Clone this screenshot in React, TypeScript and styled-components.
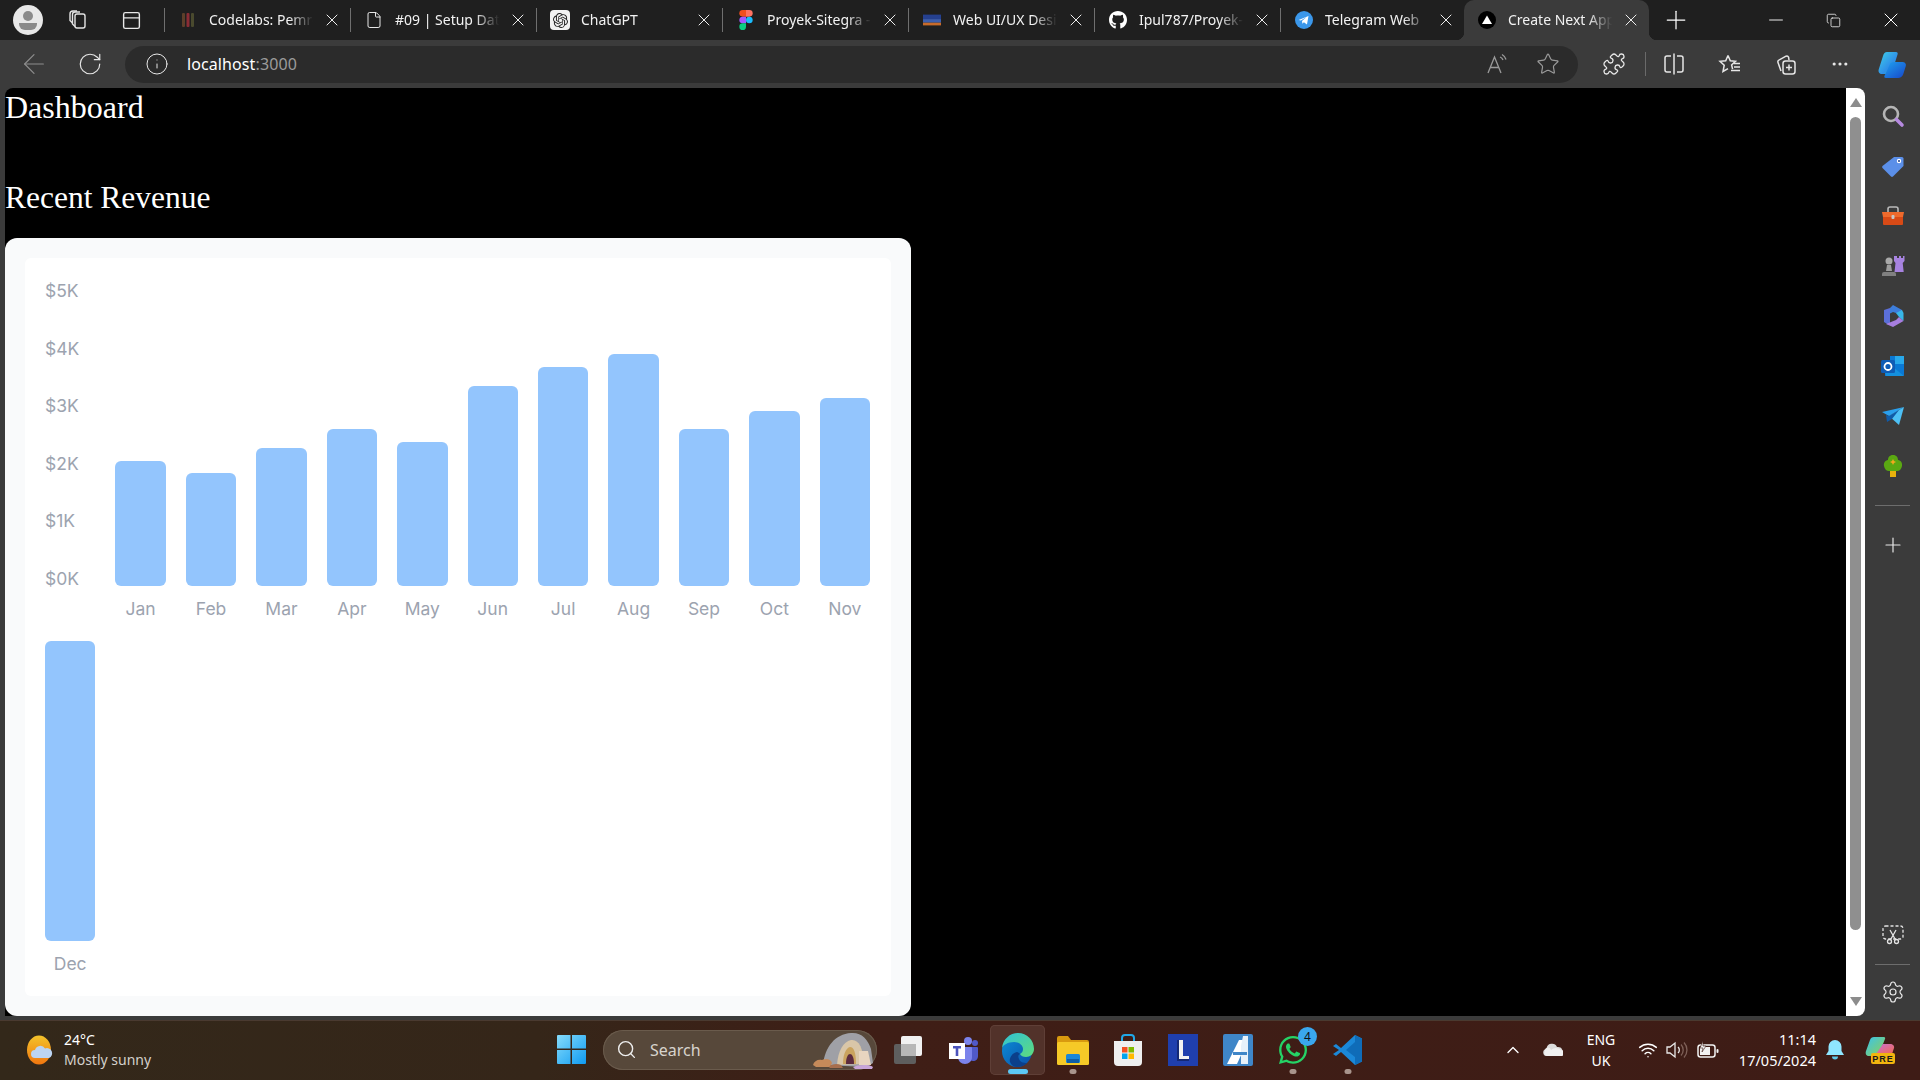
import { Fragment } from "react";
import styled, { createGlobalStyle } from "styled-components";
import {
  ArrowLeft, RotateCw, Info, Star, Plus, X, Minus, Copy, MoreHorizontal, Search,
  Settings, ChevronUp, Wifi, File, PanelTop, Puzzle,
} from "lucide-react";
import { FaGithub, FaWhatsapp } from "react-icons/fa";
import { SiOpenai } from "react-icons/si";

const GlobalStyle = createGlobalStyle`
  html, body { margin: 0; padding: 0; background: #3b3b3b; overflow: hidden; }
  * { box-sizing: border-box; }
`;

const uiFont = `"Noto Sans", "Open Sans", sans-serif`;

const Frame = styled.div`
  width: 1920px;
  height: 1080px;
  display: flex;
  flex-direction: column;
  background: #3b3b3b;
  overflow: hidden;
  font-family: ${uiFont};
`;

/* title bar + tabs */
const TabStrip = styled.div`
  height: 40px;
  flex: none;
  display: flex;
  align-items: center;
  background: #1f1f1f;
  color: #fff;
`;
const StripSlot = styled.div<{ $w: number }>`
  width: ${({ $w }) => $w}px;
  height: 100%;
  flex: none;
  display: flex;
  align-items: center;
  justify-content: center;
`;
const Avatar = styled.div`
  width: 30px;
  height: 30px;
  border-radius: 50%;
  background: #e8e8e8;
  display: flex;
  align-items: center;
  justify-content: center;
`;
const TabDivider = styled.div`
  width: 1px;
  height: 24px;
  flex: none;
  background: #6f6f6f;
`;
const Tab = styled.div<{ $active?: boolean; $w?: number }>`
  position: relative;
  width: ${({ $w }) => $w ?? 185}px;
  height: 40px;
  flex: none;
  display: flex;
  align-items: center;
  padding: 0 6px 0 14px;
  background: ${({ $active }) => ($active ? "#3b3b3b" : "transparent")};
  border-radius: ${({ $active }) => ($active ? "10px 10px 0 0" : "0")};
  ${({ $active }) =>
    $active &&
    `
    &::before, &::after {
      content: "";
      position: absolute;
      bottom: 0;
      width: 8px;
      height: 8px;
    }
    &::before { left: -8px; background: radial-gradient(circle at 0 0, transparent 8px, #3b3b3b 8.5px); }
    &::after { right: -8px; background: radial-gradient(circle at 100% 0, transparent 8px, #3b3b3b 8.5px); }
  `}
`;
const Favicon = styled.div`
  width: 18px;
  height: 18px;
  flex: none;
  display: flex;
  align-items: center;
  justify-content: center;
`;
const ChatBadge = styled.div`
  width: 20px;
  height: 20px;
  flex: none;
  display: flex;
  align-items: center;
  justify-content: center;
  border-radius: 4px;
  background: #f2f2f2;
`;
const TabTitle = styled.div`
  flex: 1;
  min-width: 0;
  margin-left: 12px;
  padding-bottom: 2px;
  font-size: 14px;
  white-space: nowrap;
  overflow: hidden;
  color: #f2f2f2;
  mask-image: linear-gradient(to right, #000 72%, transparent 94%);
`;
const TabClose = styled.div`
  width: 24px;
  flex: none;
  display: flex;
  justify-content: center;
  color: #eee;
`;
const WindowControls = styled.div`
  margin-left: auto;
  height: 100%;
  display: flex;
`;

/* address bar row */
const Toolbar = styled.div`
  height: 48px;
  flex: none;
  display: flex;
  align-items: center;
  padding-left: 6px;
  background: #3b3b3b;
  color: #e6e6e6;
`;
const ToolSlot = styled.div<{ $w?: number; $dim?: boolean }>`
  width: ${({ $w }) => $w ?? 56}px;
  flex: none;
  display: flex;
  align-items: center;
  justify-content: center;
  color: ${({ $dim }) => ($dim ? "#8d8d8d" : "inherit")};
`;
const AddressBar = styled.div`
  width: 1453px;
  height: 37px;
  flex: none;
  margin-left: 7px;
  margin-right: 8px;
  display: flex;
  align-items: center;
  padding: 0 5px 0 20px;
  border-radius: 19px;
  background: #2b2b2b;
`;
const Url = styled.div`
  margin-left: 18px;
  font-size: 16px;
  letter-spacing: 0.1px;
  color: #fff;
  span { color: #9b9b9b; }
`;
const AddressEnd = styled.div`
  margin-left: auto;
  display: flex;
  align-items: center;
  color: #9a9a9a;
`;
const ToolDivider = styled.div`
  width: 1px;
  height: 24px;
  flex: none;
  margin: 0 0 0 3px;
  background: #6a6a6a;
`;

/* browser body */
const BrowserBody = styled.div`
  height: 932px;
  flex: none;
  display: flex;
  padding: 0 0 4px 5px;
`;
const Page = styled.main`
  width: 1841px;
  height: 928px;
  flex: none;
  padding-top: 1px;
  background: #000;
  border-radius: 8px 0 0 0;
  overflow: hidden;
  font-family: "Liberation Serif", serif;
  color: #fff;
`;
const Title = styled.h1`
  margin: 0;
  font-size: 32px;
  font-weight: 400;
`;
const Subtitle = styled.h2`
  margin: 54px 0 22px;
  font-size: 31.5px;
  font-weight: 400;
`;
const Card = styled.section`
  width: 906px;
  padding: 20px;
  border-radius: 12px;
  background: #f9fafb;
`;
const ChartGrid = styled.div`
  display: grid;
  grid-template-columns: repeat(12, minmax(0, 1fr));
  align-items: end;
  gap: 20px;
  padding: 20px 21px 20px 20px;
  border-radius: 6px;
  background: #fff;
  font-family: Inter, sans-serif;
  font-size: 17.5px;
  line-height: 25px;
  color: #9ca3af;
`;
const YAxis = styled.div`
  height: 312.5px;
  margin-bottom: 30px;
  display: flex;
  flex-direction: column;
  justify-content: space-between;
`;
const MonthColumn = styled.div`
  display: flex;
  flex-direction: column;
  align-items: center;
`;
const Bar = styled.div`
  width: 100%;
  border-radius: 6px;
  background: #93c5fd;
`;
const MonthLabel = styled.p`
  margin: 10px 0 0;
`;

const Scrollbar = styled.div`
  width: 19px;
  height: 928px;
  flex: none;
  display: flex;
  flex-direction: column;
  align-items: center;
  background: #fff;
  border-radius: 0 8px 8px 0;
`;
const ScrollArrow = styled.div<{ $down?: boolean }>`
  width: 0;
  height: 0;
  flex: none;
  margin: ${({ $down }) => ($down ? "auto 0 10px" : "10px 0 0")};
  border-left: 6px solid transparent;
  border-right: 6px solid transparent;
  ${({ $down }) => ($down ? "border-top" : "border-bottom")}: 9px solid #8c8c8c;
`;
const ScrollThumb = styled.div`
  width: 11px;
  height: 813px;
  flex: none;
  margin-top: 10px;
  border-radius: 6px;
  background: #8f8f8f;
`;

const Sidebar = styled.aside`
  width: 55px;
  height: 928px;
  flex: none;
  display: flex;
  flex-direction: column;
  align-items: center;
  padding: 3px 0 6px;
  color: #e8e8e8;
`;
const SideSlot = styled.div`
  width: 100%;
  height: 50px;
  flex: none;
  display: flex;
  align-items: center;
  justify-content: center;
`;
const SideRule = styled.div<{ $tight?: boolean }>`
  width: 35px;
  height: 1px;
  flex: none;
  margin: ${({ $tight }) => ($tight ? "11px 0 9px" : "14px 0")};
  background: #6d6d6d;
`;
const SideBottom = styled.div`
  margin-top: auto;
  display: flex;
  flex-direction: column;
  align-items: center;
  width: 100%;
`;
const SideSmall = styled(SideSlot)`
  height: 36px;
`;

/* windows taskbar */
const Taskbar = styled.footer`
  height: 60px;
  flex: none;
  display: flex;
  align-items: center;
  padding-bottom: 2px;
  background: linear-gradient(90deg, #33281a 0%, #352619 28%, #3f1e16 45%, #3e1c16 100%);
  border-top: 1px solid #4a3a30;
  color: #fff;
`;
const Weather = styled.div`
  width: 544px;
  flex: none;
  display: flex;
  align-items: center;
  padding-left: 26px;
  gap: 10px;
`;
const WeatherText = styled.div`
  font-size: 14px;
  line-height: 20px;
  small { display: block; font-size: 14px; color: #d3d0cb; }
`;
const TaskSlot = styled.div<{ $active?: boolean; $running?: boolean }>`
  position: relative;
  width: 55px;
  height: 50px;
  flex: none;
  display: flex;
  align-items: center;
  justify-content: center;
  border-radius: 5px;
  ${({ $active }) => $active && "background: #52322a; box-shadow: inset 0 0 0 1px #5f3f37;"}
  ${({ $running, $active }) =>
    $running &&
    `
    &::after {
      content: "";
      position: absolute;
      bottom: 1px;
      left: 50%;
      transform: translateX(-50%);
      width: ${$active ? 20 : 7}px;
      height: 5px;
      border-radius: 3px;
      background: ${$active ? "#5cc8f5" : "#a8948c"};
    }
  `}
`;
const SearchPill = styled.div`
  position: relative;
  width: 274px;
  height: 40px;
  flex: none;
  margin: 0 3px 0 4px;
  display: flex;
  align-items: center;
  padding-left: 13px;
  gap: 13px;
  border-radius: 20px;
  background: #57483a;
  box-shadow: inset 0 0 0 1px #6a5b4c;
  font-size: 16px;
  color: #d8d4cd;
`;
const SearchArt = styled.div`
  margin-left: auto;
  margin-right: 2px;
  display: flex;
`;
const Badge = styled.span`
  position: absolute;
  top: 2px;
  right: 3px;
  width: 19px;
  height: 19px;
  border-radius: 50%;
  background: #3aa7ee;
  color: #111;
  font-size: 12px;
  line-height: 19px;
  text-align: center;
`;
const Tray = styled.div`
  margin-left: auto;
  padding-right: 18px;
  display: flex;
  align-items: center;
`;
const TraySlot = styled.div<{ $w: number }>`
  width: ${({ $w }) => $w}px;
  flex: none;
  display: flex;
  align-items: center;
  justify-content: center;
`;
const Lang = styled.div`
  font-size: 14px;
  line-height: 21px;
  text-align: center;
`;
const Clock = styled.div`
  width: 91px;
  flex: none;
  font-size: 14.5px;
  line-height: 21px;
  text-align: right;
  white-space: nowrap;
`;

const months = [
  { month: "Jan", revenue: 2000 },
  { month: "Feb", revenue: 1800 },
  { month: "Mar", revenue: 2200 },
  { month: "Apr", revenue: 2500 },
  { month: "May", revenue: 2300 },
  { month: "Jun", revenue: 3200 },
  { month: "Jul", revenue: 3500 },
  { month: "Aug", revenue: 3700 },
  { month: "Sep", revenue: 2500 },
  { month: "Oct", revenue: 2800 },
  { month: "Nov", revenue: 3000 },
  { month: "Dec", revenue: 4800 },
];
const yLabels = ["$5K", "$4K", "$3K", "$2K", "$1K", "$0K"];

const WorkspacesIcon = () => (
  <svg width="22" height="22" viewBox="0 0 22 22" fill="none" stroke="#e4e4e4" strokeWidth="1.4">
    <rect x="9" y="5" width="10" height="14" rx="2" />
    <path d="M9 17.5 6.5 15V5.5A2.5 2.5 0 0 1 9 3h5" />
    <path d="M6.5 14 4 11.5V5a3 3 0 0 1 3-3h4" />
  </svg>
);
const FigmaIcon = () => (
  <svg width="14" height="20" viewBox="0 0 14 21">
    <path d="M3.5 0H7v7H3.5a3.5 3.5 0 0 1 0-7z" fill="#f24e1e" />
    <path d="M7 0h3.5a3.5 3.5 0 0 1 0 7H7z" fill="#ff7262" />
    <path d="M3.5 7H7v7H3.5a3.5 3.5 0 0 1 0-7z" fill="#a259ff" />
    <circle cx="10.5" cy="10.5" r="3.5" fill="#1abcfe" />
    <path d="M3.5 14H7v3.5A3.5 3.5 0 1 1 3.5 14z" fill="#0acf83" />
  </svg>
);
const CodelabsIcon = () => (
  <svg width="14" height="18" viewBox="0 0 14 18">
    <rect x="1" y="2" width="3" height="14" rx="1" fill="#5d3f2a" />
    <rect x="5.5" y="2" width="3" height="14" rx="1" fill="#8a2c35" />
    <rect x="10" y="2" width="3" height="14" rx="1" fill="#4a4a2e" />
  </svg>
);
const CourseIcon = () => (
  <svg width="20" height="14" viewBox="0 0 20 14">
    <rect y="1" width="20" height="5" fill="#25408f" />
    <rect y="6" width="20" height="4" fill="#3d5fae" />
    <rect y="10" width="20" height="3" fill="#c86b2a" />
  </svg>
);
const NextIcon = () => (
  <svg width="18" height="18" viewBox="0 0 18 18">
    <circle cx="9" cy="9" r="9" fill="#000" />
    <path d="M9 4.5 14 13H4z" fill="#fff" />
  </svg>
);
const TelegramBadge = () => (
  <svg width="20" height="20" viewBox="0 0 20 20">
    <circle cx="10" cy="10" r="10" fill="#3b97ea" />
    <path d="M4 10 15 5.5 13.3 15l-3.4-2.6-1.7 1.7-.4-3.1 5-4.4-6.3 3.9z" fill="#fff" />
  </svg>
);
const ChatGptIcon = () => (
  <ChatBadge>
    <SiOpenai size={15} color="#222" />
  </ChatBadge>
);
const ReadAloudIcon = () => (
  <svg width="24" height="22" viewBox="0 0 24 22" fill="none" stroke="currentColor" strokeWidth="1.3">
    <path d="M2 20 8.5 4 15 20M4.5 14.5h8" />
    <path d="M14 4a5 5 0 0 1 3 3M16 1.5a8 8 0 0 1 4 5" />
  </svg>
);
const SplitIcon = () => (
  <svg width="24" height="24" viewBox="0 0 24 24" fill="none" stroke="currentColor" strokeWidth="1.5">
    <path d="M9 4H5a2 2 0 0 0-2 2v12a2 2 0 0 0 2 2h4" />
    <path d="M15 4h4a2 2 0 0 1 2 2v12a2 2 0 0 1-2 2h-4" />
    <path d="M12 1.500v21" />
  </svg>
);
const FavoritesIcon = () => (
  <svg width="24" height="24" viewBox="0 0 24 24" fill="none" stroke="currentColor" strokeWidth="1.5">
    <path d="M10 3.5 12.3 8.8l5.2.5-3.9 3.6 1 4.3M10 3.5 7.7 8.8l-5.7.5 4.2 3.9L5 19.5l5-2.9" />
    <path d="M16 11.5h6M16 15h6M13 18.5h9" />
  </svg>
);
const CollectionsIcon = () => (
  <svg width="24" height="24" viewBox="0 0 24 24" fill="none" stroke="currentColor" strokeWidth="1.5">
    <path d="M8 19 5 10.5a2 2 0 0 1 1.3-2.6L13 4.2a2 2 0 0 1 2.6 1.1L16 8" />
    <rect x="10" y="9" width="12" height="13" rx="2.5" />
    <path d="M16 12.5v6M13 15.5h6" />
  </svg>
);
const CopilotIcon = () => (
  <svg width="30" height="30" viewBox="0 0 30 30">
    <defs>
      <linearGradient id="copA" x1="0" y1="0" x2="1" y2="1">
        <stop offset="0" stopColor="#3fd0e8" />
        <stop offset="0.6" stopColor="#2f8fe8" />
        <stop offset="1" stopColor="#38d39a" />
      </linearGradient>
      <linearGradient id="copB" x1="0" y1="0" x2="1" y2="1">
        <stop offset="0" stopColor="#1fa2f0" />
        <stop offset="1" stopColor="#1746c8" />
      </linearGradient>
    </defs>
    <path d="M10 3h9c1.5 0 2 1 1.6 2.3L15 23c-.5 1.500-1.600 2-3 2H5c-2.500 0-4-2-3.300-4.500L6 7c.700-2.500 2-4 4-4z" fill="url(#copA)" />
    <path d="M17 13h8c2.500 0 4.500 1.500 3.800 4l-2.500 8c-.800 2.500-3 4-5.300 4H9c-1.500 0-2-1-1.500-2.300L13 15c.5-1.500 2.500-2 4-2z" fill="url(#copB)" />
  </svg>
);

const SideSearch = () => (
  <svg width="24" height="24" viewBox="0 0 24 24" fill="none">
    <circle cx="10" cy="10" r="7" stroke="#b5b5b5" strokeWidth="2.6" />
    <path d="M15.500 15.500 21 21" stroke="#b68ae0" strokeWidth="3.600" strokeLinecap="round" />
  </svg>
);
const SideTag = () => (
  <svg width="24" height="24" viewBox="0 0 24 24">
    <path d="M13 3h8a1.500 1.500 0 0 1 1.500 1.500V12L12 22.500a1.500 1.500 0 0 1-2 0L1.500 14a1.500 1.500 0 0 1 0-2z" fill="#5b8fe8" />
    <circle cx="18" cy="7" r="2.200" fill="#fff" />
    <circle cx="18" cy="7" r="1" fill="#1e3f8a" />
  </svg>
);
const SideToolbox = () => (
  <svg width="24" height="24" viewBox="0 0 24 24">
    <path d="M7 8V5a2 2 0 0 1 2-2h6a2 2 0 0 1 2 2v3" fill="none" stroke="#b9b9b9" strokeWidth="1.600" />
    <path d="M1 8h22l-1 5H2z" fill="#ef6a2c" />
    <path d="M2 13h20v7a1 1 0 0 1-1 1H3a1 1 0 0 1-1-1z" fill="#d84a16" />
    <rect x="10.500" y="11" width="3" height="4" rx="1" fill="#c8c8c8" />
  </svg>
);
const SideGames = () => (
  <svg width="24" height="24" viewBox="0 0 24 24">
    <path d="M14 2h2v2h2V2h2v2h2V2h1.500v5l-1.800 2 1 9H13.500l1-9L13 7V2z" fill="#a783e0" />
    <circle cx="8" cy="7" r="3.500" fill="#a9a9a9" />
    <path d="M6 11h4l1 6H5z" fill="#9d9d9d" />
    <path d="M3 18h10a2 2 0 0 1 2 2v2H1v-2a2 2 0 0 1 2-2z" fill="#808080" />
  </svg>
);
const SideM365 = () => (
  <svg width="22" height="24" viewBox="0 0 22 24">
    <path d="M11 1 20 6v6l-6-3-3-1-3 1.500V4z" fill="#3d7ddb" />
    <path d="M2 6l6-2v16l-2 .5L2 18z" fill="#5b6fd8" />
    <path d="M20 6l1.500 3v8L17 13l-3-4z" fill="#38b7e8" />
    <path d="M21.500 17 11 23l-7-3 5-2 5-2 3-3z" fill="#a77ee0" />
  </svg>
);
const SideOutlook = () => (
  <svg width="24" height="24" viewBox="0 0 24 24">
    <path d="M9 2h13a1 1 0 0 1 1 1v18a1 1 0 0 1-1 1H4v-4h5z" fill="#0a78d4" />
    <path d="M14 2h9v8h-9z" fill="#28a8ea" />
    <path d="M4 17l8-4 11 9H5z" fill="#1490df" />
    <rect x="0" y="6" width="14" height="13" rx="1.500" fill="#0f5cb5" />
    <circle cx="7" cy="12.500" r="3.500" fill="none" stroke="#fff" strokeWidth="1.800" />
  </svg>
);
const SideSend = () => (
  <svg width="24" height="20" viewBox="0 0 24 20">
    <path d="M1 6 23 1 8 10z" fill="#2aa0ee" />
    <path d="M23 1 18 19 8 10z" fill="#4dc0f5" />
    <path d="M5 9l3 1 10-6-7 9-5 3z" fill="#105ba8" />
  </svg>
);
const SideTree = () => (
  <svg width="20" height="24" viewBox="0 0 20 24">
    <rect x="7" y="16" width="6" height="7" fill="#e8b10c" />
    <path d="M10 1c3.500 0 5 2.500 5 5 3 .5 4.500 3 4 6-.5 3-2.500 5-5 5H6c-2.500 0-4.500-2-5-5-.5-3 1-5.500 4-6 0-2.500 1.500-5 5-5z" fill="#5aa812" />
    <path d="M10 5l1 2 2 1-2 1-1 2-1-2-2-1 2-1z" fill="#f2a81d" />
  </svg>
);
const SideCapture = () => (
  <svg width="22" height="20" viewBox="0 0 22 20" fill="none" stroke="#e4e4e4" strokeWidth="1.300">
    <rect x="1" y="1" width="20" height="13" rx="2.500" strokeDasharray="3 2" />
    <circle cx="7.500" cy="16.500" r="2" />
    <circle cx="14.500" cy="16.500" r="2" />
    <path d="M8.500 14.800 14 5M13.500 14.800 8 5" />
  </svg>
);

const WeatherIcon = () => (
  <svg width="28" height="30" viewBox="0 0 28 30">
    <defs>
      <linearGradient id="sun" x1="0" y1="0" x2="0" y2="1">
        <stop offset="0" stopColor="#f3c32b" />
        <stop offset="1" stopColor="#f0760f" />
      </linearGradient>
    </defs>
    <ellipse cx="13" cy="15" rx="12" ry="14.500" fill="url(#sun)" />
    <path d="M9 23a4 4 0 0 1 0-8 5.500 5.500 0 0 1 10-1.500 4.800 4.800 0 0 1 4 9.500z" fill="#bcd4f2" />
  </svg>
);
const WindowsLogo = () => (
  <svg width="29" height="29" viewBox="0 0 29 29">
    <defs>
      <linearGradient id="win" x1="0" y1="0" x2="1" y2="1">
        <stop offset="0" stopColor="#86dcfb" />
        <stop offset="1" stopColor="#0f9bf2" />
      </linearGradient>
    </defs>
    <path d="M0 1a1 1 0 0 1 1-1h12.500v13.500H0zM15 0h13a1 1 0 0 1 1 1v12.500H15zM0 15h13.500v14H1a1 1 0 0 1-1-1zM15 15h14v13a1 1 0 0 1-1 1H15z" fill="url(#win)" />
  </svg>
);
const BingArt = () => (
  <svg width="62" height="38" viewBox="0 0 62 38">
    <path d="M10 34C12 16 22 3 38 2c10-1 17 6 20 16l2 14-6 4z" fill="#9fa0a6" />
    <path d="M24 34C25 20 30 11 38 9c8-1 12 8 13 24z" fill="#d9c6a8" />
    <path d="M30 33c0-10 3-16 7-17 4 0 6 6 6 17z" fill="#caa35e" />
    <path d="M33 33c0-7 2-10 4-10s4 3 4 10z" fill="#5b2a3e" />
    <path d="M46 20h9l3 14H46z" fill="#e8d5c0" />
    <path d="M0 34c1-4 5-6 9-5 4-2 9-1 10 3l-2 4H3z" fill="#c58a5a" />
    <path d="M16 36c2-3 8-4 12-2l2 3H17z" fill="#a86f4e" />
    <path d="M40 36c4-2 16-3 20 0l-1 2H42z" fill="#c9a6d8" />
  </svg>
);
const TaskViewIcon = () => (
  <svg width="30" height="30" viewBox="0 0 30 30">
    <rect x="1" y="9" width="22" height="20" rx="2" fill="#5e5e5e" />
    <rect x="8" y="1" width="21" height="20" rx="2" fill="#f1f1f1" />
    <rect x="8" y="9" width="15" height="12" fill="#b7b7b7" />
  </svg>
);
const TeamsIcon = () => (
  <svg width="30" height="28" viewBox="0 0 30 28">
    <circle cx="20" cy="5" r="4" fill="#7b83eb" />
    <circle cx="27" cy="7" r="3" fill="#5059c9" />
    <path d="M22 11h7a1 1 0 0 1 1 1v8c0 3-2 5-5 5-2 0-3-1-4-2z" fill="#5059c9" />
    <path d="M10 11h13a1 1 0 0 1 1 1v9c0 4-3 7-7 7s-7-3-7-7z" fill="#7b83eb" />
    <rect x="1" y="7" width="16" height="16" fill="#fff" />
    <path d="M5 10h8v2.500h-2.700V20H7.700v-7.500H5z" fill="#4b53bc" />
  </svg>
);
const EdgeIcon = () => (
  <svg width="32" height="34" viewBox="0 0 32 34">
    <defs>
      <linearGradient id="edgeB" x1="0" y1="0" x2="1" y2="1">
        <stop offset="0" stopColor="#0c8fd8" />
        <stop offset="1" stopColor="#0a4fa8" />
      </linearGradient>
      <linearGradient id="edgeG" x1="0" y1="0" x2="1" y2="1">
        <stop offset="0" stopColor="#2fc1d8" />
        <stop offset="1" stopColor="#5fdc7c" />
      </linearGradient>
    </defs>
    <ellipse cx="15" cy="18" rx="15" ry="16" fill="url(#edgeB)" />
    <path d="M0 15C1 6 8 0 16 0c9 0 16 7 16 16 0 5-4 8-8 8-3 0-5-1-6-3 2-1 3-3 3-5 0-4-4-7-9-7-6 0-11 3-12 6z" fill="url(#edgeG)" />
    <path d="M18 21c-2 1-2 3-1 5 1 3 4 4 8 4-3 3-6 4-10 4-3 0-6-2-7-5-1-4 2-9 7-10 1 0 2 1 3 2z" fill="#0b3f8a" />
  </svg>
);
const FolderIcon = () => (
  <svg width="32" height="30" viewBox="0 0 32 30">
    <path d="M0 3a2 2 0 0 1 2-2h9l3 4h16a2 2 0 0 1 2 2v5H0z" fill="#d99a0f" />
    <rect y="7" width="32" height="23" rx="1.500" fill="#f6c927" />
    <rect x="9" y="19" width="14" height="9" rx="1.500" fill="#1a87d8" />
    <rect x="10" y="24" width="12" height="4" fill="#0e5fa8" />
  </svg>
);
const StoreIcon = () => (
  <svg width="30" height="32" viewBox="0 0 30 32">
    <path d="M9 7V4a3 3 0 0 1 3-3h6a3 3 0 0 1 3 3v3" fill="none" stroke="#20a8e8" strokeWidth="2" />
    <path d="M1 7h28v21a4 4 0 0 1-4 4H5a4 4 0 0 1-4-4z" fill="#efefef" />
    <rect x="9" y="13" width="5.500" height="5.500" fill="#f25022" />
    <rect x="15.500" y="13" width="5.500" height="5.500" fill="#7fba00" />
    <rect x="9" y="19.500" width="5.500" height="5.500" fill="#00a4ef" />
    <rect x="15.500" y="19.500" width="5.500" height="5.500" fill="#ffb900" />
  </svg>
);
const LIcon = () => (
  <svg width="30" height="32" viewBox="0 0 30 32">
    <rect width="30" height="32" fill="#1f3fae" />
    <path d="M9 6h4v18h8v3H9z" fill="#0f1f5c" opacity=".7" />
    <path d="M11 6h4v16h6v3H11z" fill="#f2f2f2" />
  </svg>
);
const AIcon = () => (
  <svg width="30" height="32" viewBox="0 0 30 32">
    <rect width="30" height="32" rx="2" fill="#3f86c8" />
    <path d="M4 30 16 6h7v4L14 30z" fill="#fff" />
    <path d="M20 2h5v28h-7V12z" fill="#e8f1fa" />
    <rect x="10" y="18" width="14" height="3" fill="#3f86c8" />
  </svg>
);
const VsCodeIcon = () => (
  <svg width="30" height="32" viewBox="0 0 30 32">
    <path d="M22 1 29 4.500v23L22 31 8 18l-5 4-3-2 6-4-6-4 3-2 5 4z" fill="#1b88d8" />
    <path d="M22 1 29 4.500v23L22 31 22 8l-9 8 9 7z" fill="#0f6cb8" />
  </svg>
);
const OneDriveIcon = () => (
  <svg width="20" height="13" viewBox="0 0 20 13">
    <path d="M4 13a3.500 3.500 0 0 1-.5-7A5.500 5.500 0 0 1 14 4a4.500 4.500 0 0 1 2 9z" fill="#dcdcdc" />
    <path d="M2 8a3 3 0 0 1 6-1 7 7 0 0 1 10 0 3 3 0 0 1 0 6H4a3 3 0 0 1-2-5z" fill="#f0f0f0" />
  </svg>
);
const VolumeIcon = () => (
  <svg width="22" height="20" viewBox="0 0 22 20" fill="none" stroke="#e8e8e8" strokeWidth="1.300">
    <path d="M1 7h3l5-4v14l-5-4H1z" />
    <path d="M12 7a4 4 0 0 1 0 6" />
    <path d="M15 4.500a8 8 0 0 1 0 11M18 2.500a11 11 0 0 1 0 15" stroke="#7e6058" />
  </svg>
);
const BatteryIcon = () => (
  <svg width="22" height="18" viewBox="0 0 22 18" fill="none">
    <rect x="1" y="4" width="17" height="12" rx="2.500" stroke="#f2f2f2" strokeWidth="1.500" />
    <rect x="3" y="6" width="10" height="8" fill="#f2f2f2" />
    <rect x="19.500" y="8" width="2" height="4" rx="1" fill="#f2f2f2" />
    <path d="M6 0 3 7h3l-1 4 4-6H6z" fill="#f2f2f2" stroke="#3e1c16" strokeWidth=".6" />
  </svg>
);
const BellIcon = () => (
  <svg width="18" height="20" viewBox="0 0 18 20">
    <path d="M9 0a6.500 6.500 0 0 1 6.500 6.500V11l2.500 4H0l2.500-4V6.500A6.500 6.500 0 0 1 9 0z" fill="#8fe6ff" />
    <path d="M6 16.500h6a3 3 0 0 1-6 0z" fill="#5fc8e8" />
  </svg>
);
const CopilotPreIcon = () => (
  <svg width="30" height="28" viewBox="0 0 30 28">
    <defs>
      <linearGradient id="preA" x1="0" y1="0" x2="1" y2="1">
        <stop offset="0" stopColor="#39c3ee" />
        <stop offset="1" stopColor="#8fd14f" />
      </linearGradient>
      <linearGradient id="preB" x1="0" y1="0" x2="1" y2="1">
        <stop offset="0" stopColor="#c86dd7" />
        <stop offset="1" stopColor="#f36b4f" />
      </linearGradient>
    </defs>
    <path d="M9 1h10c1 0 1.500 1 1 2l-6 15c-.5 1-1 2-3 2H4c-2.500 0-4-2-3-5L5 4c.6-2 2-3 4-3z" fill="url(#preA)" />
    <path d="M18 8h7c3 0 4.500 2 4 4l-2 6H11z" fill="url(#preB)" />
    <rect x="6" y="17" width="24" height="11" rx="2" fill="#f2b40f" />
    <text x="18" y="26" textAnchor="middle" fontSize="9" fontWeight="700" fontFamily="Liberation Sans, sans-serif" fill="#1a1a1a" letterSpacing="1">PRE</text>
  </svg>
);

const tabs = [
  { title: "Codelabs: Pemrograman Web", icon: <CodelabsIcon /> },
  { title: "#09 | Setup Database Project", icon: <File size={22} strokeWidth={1.3} color="#eee" /> },
  { title: "ChatGPT", icon: <ChatGptIcon /> },
  { title: "Proyek-Sitegra - Figma", icon: <FigmaIcon /> },
  { title: "Web UI/UX Design Course", icon: <CourseIcon /> },
  { title: "Ipul787/Proyek-Sitegra", icon: <FaGithub size={20} color="#fff" /> },
];

const App = () => {
  return (
    <Frame>
      <GlobalStyle />
      <TabStrip>
        <StripSlot $w={56}>
          <Avatar>
            <svg width="20" height="20" viewBox="0 0 20 20">
              <circle cx="10" cy="6" r="5" fill="#8a8a8a" />
              <path d="M1 13h18v1a6 6 0 0 1-6 6H7a6 6 0 0 1-6-6z" fill="#8a8a8a" />
            </svg>
          </Avatar>
        </StripSlot>
        <StripSlot $w={42}><WorkspacesIcon /></StripSlot>
        <StripSlot $w={66}><PanelTop size={21} strokeWidth={1.6} color="#e8e8e8" /></StripSlot>
        <TabDivider />
        {tabs.map((tab) => (
          <Fragment key={tab.title}>
            <Tab>
              <Favicon>{tab.icon}</Favicon>
              <TabTitle>{tab.title}</TabTitle>
              <TabClose><X size={20} strokeWidth={1.2} /></TabClose>
            </Tab>
            <TabDivider />
          </Fragment>
        ))}
        <Tab $w={183}>
          <Favicon><TelegramBadge /></Favicon>
          <TabTitle>Telegram Web</TabTitle>
          <TabClose><X size={20} strokeWidth={1.2} /></TabClose>
        </Tab>
        <Tab $active>
          <Favicon><NextIcon /></Favicon>
          <TabTitle>Create Next App</TabTitle>
          <TabClose><X size={20} strokeWidth={1.2} /></TabClose>
        </Tab>
        <StripSlot $w={54}><Plus size={30} strokeWidth={1} /></StripSlot>
        <WindowControls>
          <StripSlot $w={57.5}><Minus size={22} strokeWidth={1} /></StripSlot>
          <StripSlot $w={57.5}><Copy size={15} strokeWidth={1.2} /></StripSlot>
          <StripSlot $w={57.5}><X size={24} strokeWidth={1} /></StripSlot>
        </WindowControls>
      </TabStrip>

      <Toolbar>
        <ToolSlot $dim><ArrowLeft size={32} strokeWidth={0.9} /></ToolSlot>
        <ToolSlot><RotateCw size={26} strokeWidth={1.1} /></ToolSlot>
        <AddressBar>
          <Info size={24} strokeWidth={1} color="#e8e8e8" />
          <Url>localhost<span>:3000</span></Url>
          <AddressEnd>
            <ToolSlot $w={51}><ReadAloudIcon /></ToolSlot>
            <ToolSlot $w={50}><Star size={24} strokeWidth={1.2} /></ToolSlot>
          </AddressEnd>
        </AddressBar>
        <ToolSlot><Puzzle size={24} strokeWidth={1.3} /></ToolSlot>
        <ToolDivider />
        <ToolSlot><SplitIcon /></ToolSlot>
        <ToolSlot><FavoritesIcon /></ToolSlot>
        <ToolSlot $w={54}><CollectionsIcon /></ToolSlot>
        <ToolSlot><MoreHorizontal size={20} strokeWidth={1.8} /></ToolSlot>
        <ToolSlot $w={48}><CopilotIcon /></ToolSlot>
      </Toolbar>

      <BrowserBody>
        <Page>
          <Title>Dashboard</Title>
          <Subtitle>Recent Revenue</Subtitle>
          <Card>
            <ChartGrid>
              <YAxis>
                {yLabels.map((label) => (
                  <span key={label}>{label}</span>
                ))}
              </YAxis>
              {months.map((m) => (
                <MonthColumn key={m.month}>
                  <Bar style={{ height: m.revenue * 0.0625 }} />
                  <MonthLabel>{m.month}</MonthLabel>
                </MonthColumn>
              ))}
            </ChartGrid>
          </Card>
        </Page>
        <Scrollbar>
          <ScrollArrow />
          <ScrollThumb />
          <ScrollArrow $down />
        </Scrollbar>
        <Sidebar>
          <SideSlot><SideSearch /></SideSlot>
          <SideSlot><SideTag /></SideSlot>
          <SideSlot><SideToolbox /></SideSlot>
          <SideSlot><SideGames /></SideSlot>
          <SideSlot><SideM365 /></SideSlot>
          <SideSlot><SideOutlook /></SideSlot>
          <SideSlot><SideSend /></SideSlot>
          <SideSlot><SideTree /></SideSlot>
          <SideRule />
          <SideSlot><Plus size={24} strokeWidth={1.2} /></SideSlot>
          <SideBottom>
            <SideSmall><SideCapture /></SideSmall>
            <SideRule $tight />
            <SideSmall><Settings size={24} strokeWidth={1.2} /></SideSmall>
          </SideBottom>
        </Sidebar>
      </BrowserBody>

      <Taskbar>
        <Weather>
          <WeatherIcon />
          <WeatherText>
            24°C
            <small>Mostly sunny</small>
          </WeatherText>
        </Weather>
        <TaskSlot><WindowsLogo /></TaskSlot>
        <SearchPill>
          <Search size={21} strokeWidth={1.6} color="#eee" />
          Search
          <SearchArt><BingArt /></SearchArt>
        </SearchPill>
        <TaskSlot><TaskViewIcon /></TaskSlot>
        <TaskSlot><TeamsIcon /></TaskSlot>
        <TaskSlot $active $running><EdgeIcon /></TaskSlot>
        <TaskSlot $running><FolderIcon /></TaskSlot>
        <TaskSlot><StoreIcon /></TaskSlot>
        <TaskSlot><LIcon /></TaskSlot>
        <TaskSlot><AIcon /></TaskSlot>
        <TaskSlot $running>
          <FaWhatsapp size={32} color="#25d366" />
          <Badge>4</Badge>
        </TaskSlot>
        <TaskSlot $running><VsCodeIcon /></TaskSlot>
        <Tray>
          <TraySlot $w={40}><ChevronUp size={20} strokeWidth={1.6} /></TraySlot>
          <TraySlot $w={40}><OneDriveIcon /></TraySlot>
          <TraySlot $w={56}><Lang>ENG<br />UK</Lang></TraySlot>
          <TraySlot $w={4} />
          <TraySlot $w={30}><Wifi size={20} strokeWidth={1.8} /></TraySlot>
          <TraySlot $w={28}><VolumeIcon /></TraySlot>
          <TraySlot $w={34}><BatteryIcon /></TraySlot>
          <Clock>11:14<br />17/05/2024</Clock>
          <TraySlot $w={38}><BellIcon /></TraySlot>
          <TraySlot $w={4} />
          <TraySlot $w={44}><CopilotPreIcon /></TraySlot>
        </Tray>
      </Taskbar>
    </Frame>
  );
};

export default App;
